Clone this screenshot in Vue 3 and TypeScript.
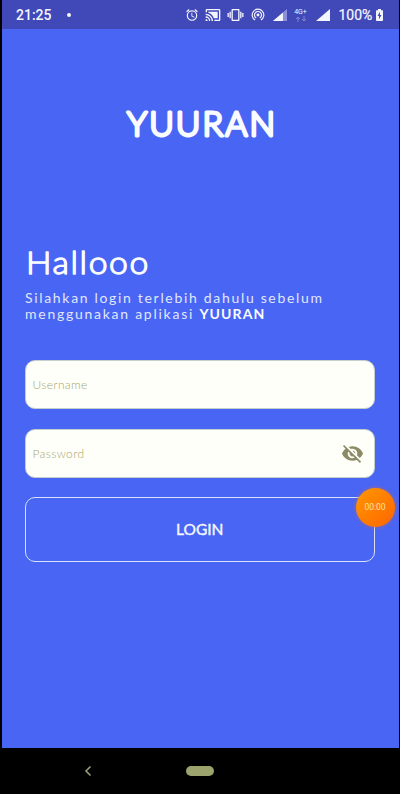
<script setup lang="ts">
import { ref } from 'vue'

const username = ref('')
const password = ref('')
const showPassword = ref(false)
</script>

<template>
  <div class="device">
    <div class="screen">
      <header class="status">
        <span class="time">21:25</span>
        <span class="dot"></span>
        <div class="icons">
          <svg class="alarm" width="14" height="14" viewBox="0 0 24 24">
            <path fill="#f4f6ff" d="M22 5.720l-4.600-3.860-1.290 1.530 4.600 3.860L22 5.720zM7.880 3.390L6.600 1.860 2 5.710l1.290 1.530 4.590-3.850zM12.500 8H11v6l4.750 2.850.75-1.230-4-2.370V8zM12 4a9 9 0 1 0 0 18 9 9 0 0 0 0-18zm0 16a7 7 0 1 1 0-14 7 7 0 0 1 0 14z" />
          </svg>
          <svg class="cast" width="16" height="16" viewBox="0 0 24 24">
            <path fill="#f4f6ff" d="M21 3H3c-1.100 0-2 .9-2 2v3h2V5h18v14h-7v2h7c1.100 0 2-.9 2-2V5c0-1.100-.9-2-2-2zM1 18v3h3c0-1.660-1.340-3-3-3zm0-4v2a5 5 0 0 1 5 5h2a7 7 0 0 0-7-7zm0-4v2a9 9 0 0 1 9 9h2c0-6.080-4.930-11-11-11zM5 7v1.630A13 13 0 0 1 13.400 17H19V7z" />
          </svg>
          <svg class="vibrate" width="17" height="16" viewBox="0 0 24 24">
            <path fill="#f4f6ff" d="M0 15h2V9H0v6zm3 2h2V7H3v10zm19-8v6h2V9h-2zm-3 8h2V7h-2v10zM16.500 3h-9C6.670 3 6 3.670 6 4.500v15c0 .83.67 1.500 1.500 1.500h9c.83 0 1.500-.67 1.500-1.500v-15c0-.83-.67-1.500-1.500-1.500zM16 19H8V5h8v14z" />
          </svg>
          <svg class="hotspot" width="14" height="14" viewBox="0 0 24 24">
            <g fill="none" stroke="#f4f6ff" stroke-width="2">
              <path d="M7 20.660A10 10 0 1 1 17 20.660" />
              <path d="M9 17.200A6 6 0 1 1 15 17.200" />
            </g>
            <circle cx="12" cy="12" r="2.500" fill="#f4f6ff" />
          </svg>
          <svg class="signal-one" width="14" height="12" viewBox="0 0 14 12">
            <path fill="#8a90dc" d="M0 12L14 0V12z" />
            <path fill="#f4f6ff" d="M0 12L10 3.430V12z" />
          </svg>
          <div class="network">
            <span>4G+</span>
            <svg width="12" height="6" viewBox="0 0 12 6">
              <path d="M3 6V1M1 3L3 1L5 3M9 0V5M7 3L9 5L11 3" fill="none" stroke="#8086d4" />
            </svg>
          </div>
          <svg class="signal-two" width="14" height="12" viewBox="0 0 14 12">
            <path fill="#f4f6ff" d="M0 12L14 0V12z" />
          </svg>
          <span class="percent">100%</span>
          <svg class="battery" width="7" height="12" viewBox="0 0 7 12">
            <path fill="#f4f6ff" d="M2 0H5V1.200H6.400Q7 1.200 7 2V11.200Q7 12 6.200 12H.8Q0 12 0 11.200V2Q0 1.200.6 1.200H2z" />
            <path fill="#4148b8" d="M4 2.800L1.500 7H3V10.300L5.500 6H4z" />
          </svg>
        </div>
      </header>

      <main class="page">
        <h1 class="brand">
          <svg width="156" height="40" viewBox="0 0 156 40">
            <text x="5" y="31.800" textLength="150" lengthAdjust="spacingAndGlyphs">YUURAN</text>
          </svg>
        </h1>
        <h2 class="greeting">
          <svg width="140" height="44" viewBox="0 0 140 44">
            <text x="1" y="30" textLength="124" lengthAdjust="spacingAndGlyphs">Hallooo</text>
          </svg>
        </h2>
        <p class="intro">
          <span class="line first">Silahkan login terlebih dahulu sebelum</span>
          <span class="line second">menggunakan aplikasi <b>YUURAN</b></span>
        </p>

        <form class="form" @submit.prevent>
          <label class="field">
            <input v-model="username" class="username" type="text" placeholder="Username" />
          </label>
          <label class="field">
            <input v-model="password" class="password" :type="showPassword ? 'text' : 'password'" placeholder="Password" />
            <svg class="eye" width="23" height="23" viewBox="0 0 24 24" @click.prevent="showPassword = !showPassword">
              <path fill="#8b8c66" d="M12 7c2.760 0 5 2.240 5 5 0 .65-.13 1.260-.36 1.830l2.920 2.920c1.510-1.260 2.700-2.890 3.430-4.750-1.730-4.390-6-7.500-11-7.500-1.400 0-2.740.25-3.980.7l2.160 2.160C10.740 7.130 11.350 7 12 7zM2 4.270l2.280 2.280.46.46C3.080 8.300 1.780 10.020 1 12c1.730 4.390 6 7.500 11 7.500 1.550 0 3.030-.3 4.380-.84l.42.42L19.730 22 21 20.730 3.270 3 2 4.270zM7.530 9.800l1.550 1.550c-.05.21-.08.43-.08.65 0 1.660 1.340 3 3 3 .22 0 .44-.03.65-.08l1.550 1.550c-.67.33-1.410.53-2.200.53-2.760 0-5-2.240-5-5 0-.79.2-1.530.53-2.200zm4.310-.78l3.150 3.150.02-.16c0-1.660-1.340-3-3-3l-.17.01z" />
            </svg>
          </label>
          <div class="action">
            <button class="login" type="submit">LOGIN</button>
            <span class="timer">00:00</span>
          </div>
        </form>
      </main>
    </div>

    <nav class="navbar">
      <svg class="back" width="8" height="12" viewBox="0 0 8 12">
        <path d="M6.500 1.500L2 6L6.500 10.500" fill="none" stroke="#a0a478" stroke-width="1.500" />
      </svg>
      <span class="home"></span>
    </nav>
  </div>
</template>

<style>
body {
  background: #000;
}
</style>

<style scoped>
.device {
  width: 400px;
  height: 794px;
  overflow: hidden;
  background: #000;
  font-family: Lato, "Open Sans", sans-serif;
}

.screen {
  width: 397px;
  height: 748px;
  margin-left: 1.500px;
  background: #4865f4;
}

.status {
  display: flex;
  align-items: center;
  height: 29px;
  padding: 1px 15.500px 0 14.500px;
  box-sizing: border-box;
  background: #4148b8;
  color: #f4f6ff;
  font-family: Roboto, sans-serif;
}

.time {
  width: 36px;
  font-size: 14px;
  font-weight: 500;
}

.dot {
  width: 4px;
  height: 4px;
  margin-left: 15px;
  border-radius: 50%;
  background: #f4f6ff;
}

.icons {
  display: flex;
  flex: 1;
  align-items: center;
  justify-content: flex-end;
}

.cast {
  margin-left: 6px;
}

.vibrate {
  margin-left: 6px;
}

.hotspot {
  margin-left: 7px;
}

.signal-one {
  margin-left: 8px;
}

.network {
  display: flex;
  flex-direction: column;
  align-items: center;
  width: 14px;
  margin-left: 7px;
  font-size: 7px;
  line-height: 8px;
}

.signal-two {
  margin-left: 8px;
}

.percent {
  width: 33px;
  margin-left: 9px;
  font-size: 14px;
  font-weight: 400;
  -webkit-text-stroke: 0.200px #f4f6ff;
}

.battery {
  margin-left: 4.500px;
}

.page {
  padding: 75px 23px 0;
}

.brand,
.greeting,
.intro {
  margin: 0;
}

.brand {
  height: 40px;
  text-align: center;
}

.brand svg,
.greeting svg {
  display: inline-block;
  overflow: visible;
  vertical-align: top;
}

.brand text {
  fill: #fafbff;
  stroke: #fafbff;
  stroke-width: 2.900px;
  stroke-linejoin: round;
  letter-spacing: 2px;
  font: 300 32.500px Lato, sans-serif;
}

.greeting {
  height: 40px;
  margin-top: 100px;
}

.greeting text {
  fill: #fafbff;
  stroke: #fafbff;
  stroke-width: 1.300px;
  stroke-linejoin: round;
  letter-spacing: 1.500px;
  font: 300 31px Lato, sans-serif;
}

.intro {
  margin-top: 6px;
  padding-left: 0.500px;
  color: #e0e7fc;
  font-size: 14px;
  line-height: 15.500px;
}

.line {
  display: block;
  white-space: nowrap;
}

.first {
  letter-spacing: 1.680px;
}

.second {
  letter-spacing: 1.740px;
}

.second b {
  color: #fafbff;
  letter-spacing: 1.100px;
}

.form {
  margin-top: 39px;
}

.field {
  display: flex;
  align-items: center;
  width: 350.500px;
  height: 49px;
  margin-bottom: 20px;
  padding: 0 10px 0 7px;
  box-sizing: border-box;
  border: 1px solid #c4ceca;
  border-radius: 10px;
  background: #fffff9;
}

input {
  flex: 1;
  min-width: 0;
  padding: 0;
  border: 0;
  outline: 0;
  background: transparent;
  color: #77795a;
  font: 400 12px Lato, sans-serif;
}

input::placeholder {
  color: #a5a66c;
  font-weight: 300;
  letter-spacing: 0.350px;
  opacity: 1;
}

.action {
  position: relative;
  width: 350.500px;
  margin-top: -1px;
}

.login {
  display: block;
  width: 100%;
  height: 65px;
  padding: 0 0 2px;
  border: 1.500px solid #d9e2f9;
  border-radius: 10px;
  background: transparent;
  color: #f5f7ff;
  font: 400 15.500px Lato, sans-serif;
  -webkit-text-stroke: 0.400px #f5f7ff;
}

.timer {
  position: absolute;
  top: -9px;
  right: -19.500px;
  width: 39px;
  height: 39px;
  border-radius: 50%;
  background: linear-gradient(135deg, #ff9800, #ff6500);
  box-shadow: 0 0 4px #a56780;
  color: #ffe0a0;
  font: 400 8.500px/39px Roboto, sans-serif;
  text-align: center;
}

.navbar {
  display: flex;
  align-items: center;
  height: 46px;
  padding-left: 84px;
}

.home {
  width: 28px;
  height: 10px;
  margin-left: 94px;
  border-radius: 5px;
  background: #9da36d;
}
</style>
